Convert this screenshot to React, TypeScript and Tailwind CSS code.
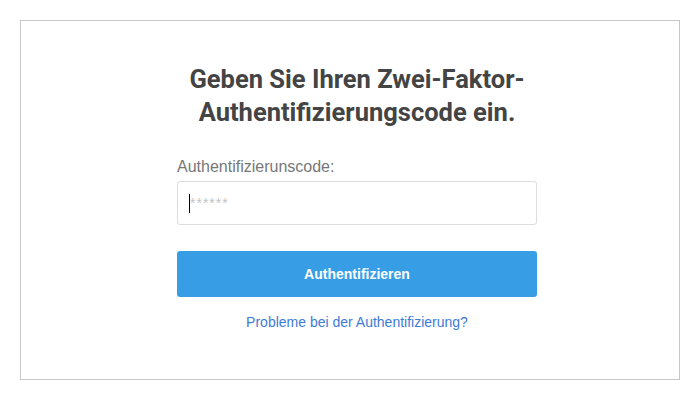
export default function App() {
    return (
        <div className="h-[400px] w-[700px] bg-white p-5">
            <div className="flex h-[360px] w-[660px] justify-center border border-[#c8c8c8] pt-[42px]">
                <div className="ml-[14px] flex w-[360px] flex-col">
                    <h1 className="text-center font-['Roboto',sans-serif] text-[25.5px] leading-[33px] font-bold text-[#444]">
                        Geben Sie Ihren Zwei-Faktor-
                        <br />
                        Authentifizierungscode ein.
                    </h1>
                    <form className="mt-[28px] flex flex-col font-['Liberation_Sans',Arial,sans-serif]">
                        <label className="text-[16px] leading-[20px] text-[#777]">
                            Authentifizierunscode:
                        </label>
                        <div className="mt-[4px] flex h-[44px] items-center rounded-[3px] border border-[#dcdcdc] px-[11px]">
                            <span className="h-[19px] w-px bg-black" />
                            <span className="text-[14px] tracking-[1px] text-[#c4c4c4]">******</span>
                        </div>
                        <button
                            type="button"
                            className="mt-[26px] h-[46px] rounded-[3px] bg-[#379ee6] text-[14px] font-bold text-white"
                        >
                            Authentifizieren
                        </button>
                        <a href="#" className="mt-[16px] text-center text-[14px] leading-[18px] text-[#3d7bd6]">
                            Probleme bei der Authentifizierung?
                        </a>
                    </form>
                </div>
            </div>
        </div>
    );
}
